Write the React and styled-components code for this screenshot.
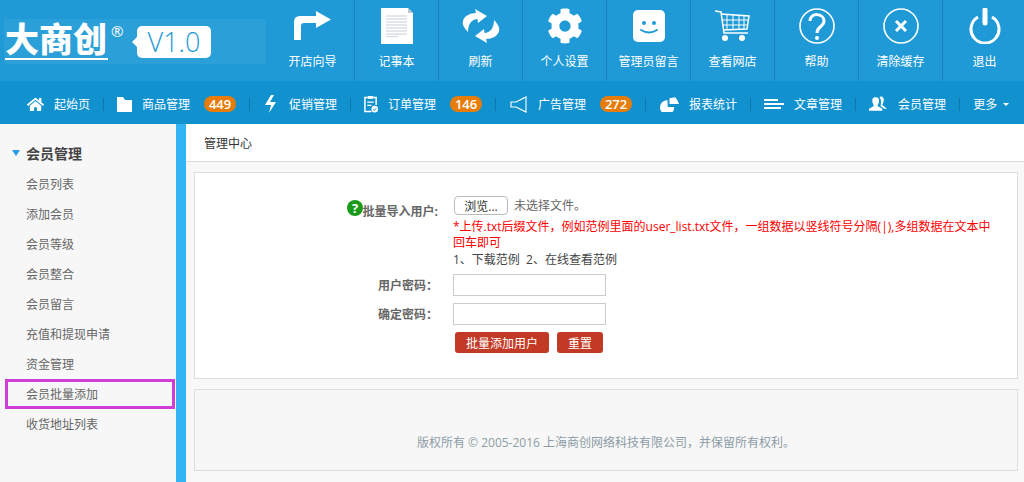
import React from 'react'
import styled, { createGlobalStyle } from 'styled-components'
import { FaHome, FaCog } from 'react-icons/fa'

const topItems = [
	{ label: '开店向导', icon: 'turn' },
	{ label: '记事本', icon: 'note' },
	{ label: '刷新', icon: 'refresh' },
	{ label: '个人设置', icon: 'gear' },
	{ label: '管理员留言', icon: 'smile' },
	{ label: '查看网店', icon: 'cart' },
	{ label: '帮助', icon: 'help' },
	{ label: '清除缓存', icon: 'clear' },
	{ label: '退出', icon: 'power' },
]

const navItems = [
	{ label: '起始页', icon: 'home', width: 17 },
	{ label: '商品管理', icon: 'folder', width: 15, badge: 449 },
	{ label: '促销管理', icon: 'bolt', width: 16 },
	{ label: '订单管理', icon: 'clipboard', width: 14, badge: 146 },
	{ label: '广告管理', icon: 'horn', width: 19, badge: 272 },
	{ label: '报表统计', icon: 'pie', width: 20 },
	{ label: '文章管理', icon: 'lines', width: 20 },
	{ label: '会员管理', icon: 'users', width: 19 },
]

const sideItems = ['会员列表', '添加会员', '会员等级', '会员整合', '会员留言', '充值和提现申请', '资金管理', '会员批量添加', '收货地址列表']

const topIcons = {
	turn: (
		<svg width="38" height="30" viewBox="0 0 38 30">
			<path d="M0 29V11Q0 5 6 5H22V0L37 8.5 22 17V12H10Q7 12 7 15V29Z" fill="#fff" />
		</svg>
	),
	note: (
		<svg width="32" height="36" viewBox="0 0 32 36">
			<path d="M0 0H27L32 5V36H0Z" fill="#fff" />
			<path d="M27 0L32 5H27Z" fill="#b9c4cc" />
			<path d="M5 8H26M5 11H26M5 14H26M5 17H26M5 20H26M5 23H26M5 26H26M5 28.5H17" stroke="#dcdfe2" strokeWidth="1.6" />
		</svg>
	),
	refresh: (
		<svg width="38" height="36" viewBox="0 0 38 36">
			<path d="M13 1L25 8 16 15 15.5 11C10 11 6 16 6 24C2 20 0 16 1 13C2 8 8 5 14 5Z" fill="#fff" />
			<path d="M25 35L13 28 22 21 22.5 25C28 25 32 20 32 12C36 16 38 20 37 23C36 28 30 31 24 31Z" fill="#fff" />
		</svg>
	),
	gear: <FaCog size={36} color="#fff" />,
	smile: (
		<svg width="32" height="32" viewBox="0 0 32 32">
			<rect width="32" height="32" rx="5" fill="#fff" />
			<circle cx="11" cy="13" r="2" fill="#1f9ad6" />
			<circle cx="21" cy="13" r="2" fill="#1f9ad6" />
			<path d="M8 20Q16 25 24 20" fill="none" stroke="#1f9ad6" strokeWidth="2" strokeLinecap="round" />
		</svg>
	),
	cart: (
		<svg width="36" height="32" viewBox="0 0 36 32" fill="none" stroke="#fff">
			<path d="M0 1L6 2 9 23H33" strokeWidth="1.5" />
			<path d="M6 4L34 6 32 19 8 20" strokeWidth="1.5" />
			<path d="M12 5V20M18 5V20M24 6V19M29 6V19M7 10H33M8 15H32" strokeWidth="1" />
			<circle cx="10" cy="28" r="3" fill="#fff" stroke="none" />
			<circle cx="27" cy="28" r="3" fill="#fff" stroke="none" />
		</svg>
	),
	help: (
		<svg width="36" height="36" viewBox="0 0 36 36" fill="none" stroke="#fff">
			<circle cx="18" cy="18" r="17" strokeWidth="1.6" />
			<path d="M11 13C11 4 25 5 25 13C25 19 18 18 18 25" strokeWidth="3" />
			<circle cx="18" cy="30" r="2" fill="#fff" stroke="none" />
		</svg>
	),
	clear: (
		<svg width="36" height="36" viewBox="0 0 36 36" fill="none" stroke="#fff">
			<circle cx="18" cy="18" r="17" strokeWidth="1.6" />
			<path d="M13 13L23 23M23 13L13 23" strokeWidth="3" />
		</svg>
	),
	power: (
		<svg width="32" height="36" viewBox="0 0 32 36" fill="none" stroke="#fff">
			<path d="M9 9A14 14 0 1 0 23 9" strokeWidth="3" />
			<path d="M16 2V15" strokeWidth="5" strokeLinecap="round" />
		</svg>
	),
}

const navIcons = {
	home: <FaHome size={17} color="#fff" />,
	folder: (
		<svg width="15" height="15" viewBox="0 0 15 15">
			<path d="M0 0H6L8 3H15V15H0Z" fill="#fff" />
		</svg>
	),
	bolt: (
		<svg width="12" height="18" viewBox="0 0 12 18">
			<path d="M6 0H9L5 7H11L4 18 6 10H0Z" fill="#fff" />
		</svg>
	),
	clipboard: (
		<svg width="15" height="18" viewBox="0 0 15 18" fill="none" stroke="#fff">
			<path d="M4 2H1V17H8M10 2H13V10" strokeWidth="1.6" />
			<rect x="4" y="0.5" width="6" height="3" fill="#fff" stroke="none" />
			<path d="M3.5 7H10.5M3.5 10.5H8" strokeWidth="1.4" />
			<circle cx="11.5" cy="14.5" r="3.5" fill="#fff" stroke="none" />
			<path d="M9.8 14.5L11.2 16 13.2 13.5" stroke="#1192cf" strokeWidth="1" />
		</svg>
	),
	horn: (
		<svg width="17" height="17" viewBox="0 0 17 17" fill="none" stroke="#fff" strokeWidth="1.1">
			<path d="M1 6H6L16 1V16L6 11H1Z" />
		</svg>
	),
	pie: (
		<svg width="21" height="15" viewBox="0 0 21 15" fill="#fff">
			<path d="M9 3A7.5 7.5 0 1 0 16 10H9Z" />
			<path d="M11 7V1L17 0Q20 3 21 7Z" />
		</svg>
	),
	lines: (
		<svg width="20" height="10" viewBox="0 0 20 10" fill="#fff">
			<rect width="14" height="2" />
			<rect y="4" width="20" height="2" />
			<rect y="8" width="17" height="2" />
		</svg>
	),
	users: (
		<svg width="20" height="16" viewBox="0 0 20 16" fill="#fff">
			<path d="M7 1C10 1 11 3 10.5 6 10.2 8 9 9 9 10L14 13V15H0V13L5 10C5 9 4 8 3.6 6 3 3 4 1 7 1Z" />
			<path d="M12 0C15 0 16 2 15.5 5 15 7 14 8 14 9L19 13H16L12 10C13 8 13 3 11 1Z" />
		</svg>
	),
}

const App = () => {
	return (
		<Page>
			<GlobalStyle />
			<TopBar>
				<Logo>
					<LogoMark>大商创</LogoMark>
					<Registered>®</Registered>
					<Version>V1.0</Version>
				</Logo>
				{topItems.map((item) => (
					<TopItem key={item.label}>
						<TopIcon>{topIcons[item.icon]}</TopIcon>
						<TopLabel>{item.label}</TopLabel>
					</TopItem>
				))}
			</TopBar>
			<Nav>
				{navItems.map((item) => (
					<NavItem key={item.label}>
						<NavIcon $width={item.width}>{navIcons[item.icon]}</NavIcon>
						<span>{item.label}</span>
						{item.badge && <Badge>{item.badge}</Badge>}
					</NavItem>
				))}
				<More>更多<Caret /></More>
			</Nav>
			<Body>
				<Sidebar>
					<SideTitle><TitleArrow />会员管理</SideTitle>
					{sideItems.map((item) => (
						<SideItem key={item} $marked={item === '会员批量添加'}>{item}</SideItem>
					))}
				</Sidebar>
				<Strip />
				<Main>
					<Crumb>管理中心</Crumb>
					<Panel>
						<FormRow $first>
							<FormLabel>
								<HelpIcon>?</HelpIcon>批量导入用户:
							</FormLabel>
							<div>
								<FileRow>
									<FileButton type="button">浏览...</FileButton>
									<span>未选择文件。</span>
								</FileRow>
								<Warning>*上传.txt后缀文件，例如范例里面的user_list.txt文件，一组数据以竖线符号分隔(|),多组数据在文本中回车即可</Warning>
								<Samples>1、下载范例&nbsp;&nbsp;2、在线查看范例</Samples>
							</div>
						</FormRow>
						<FormRow>
							<FormLabel $inset>用户密码：</FormLabel>
							<Input type="password" />
						</FormRow>
						<FormRow>
							<FormLabel $inset>确定密码：</FormLabel>
							<Input type="password" />
						</FormRow>
						<Actions>
							<RedButton type="button">批量添加用户</RedButton>
							<RedButton type="button">重置</RedButton>
						</Actions>
					</Panel>
					<Footer>版权所有 © 2005-2016 上海商创网络科技有限公司，并保留所有权利。</Footer>
				</Main>
			</Body>
		</Page>
	)
}

const font = `"Open Sans", "Noto Sans CJK SC", sans-serif`

const GlobalStyle = createGlobalStyle`
	html, body {
		margin: 0;
		height: 100%;
		overflow: hidden;
	}
	body {
		font-family: ${font};
		font-size: 12px;
	}
`

const Page = styled.div`
	width: 1024px;
	height: 482px;
	display: flex;
	flex-direction: column;
	overflow: hidden;
`

const TopBar = styled.div`
	display: flex;
	height: 81px;
	flex-shrink: 0;
	background-color: #1f9ad6;
`

const Logo = styled.div`
	width: 262px;
	height: 45px;
	margin: 19px 5px 0 4px;
	flex-shrink: 0;
	display: flex;
	align-items: flex-start;
	background-color: #2b9fd8;
`

const LogoMark = styled.div`
	width: 103px;
	height: 38px;
	margin: 1px 0 0 1px;
	color: #fff;
	font-size: 34px;
	font-weight: 900;
	line-height: 38px;
	white-space: nowrap;
	border-bottom: 2px solid #fff;
`

const Registered = styled.div`
	margin: 2px 0 0 3px;
	width: 17px;
	color: #fff;
	font-size: 15px;
	line-height: 20px;
`

const Version = styled.div`
	position: relative;
	width: 74px;
	height: 32px;
	margin: 7px 0 0 9px;
	text-align: center;
	border-radius: 5px;
	background-color: #fff;
	color: #1f9ad6;
	font-size: 27px;
	font-weight: 300;
	line-height: 32px;

	&::before {
		content: "";
		position: absolute;
		left: -5px;
		top: 11px;
		border-style: solid;
		border-width: 5px 5px 5px 0;
		border-color: transparent #fff transparent transparent;
	}
`

const TopItem = styled.div`
	width: 84px;
	flex-shrink: 0;
	display: flex;
	flex-direction: column;
	align-items: center;
	border-right: 1px solid #1583bf;
	box-sizing: border-box;
	color: #fff;
`

const TopIcon = styled.div`
	height: 36px;
	margin-top: 8px;
	display: flex;
	align-items: center;
	justify-content: center;
`

const TopLabel = styled.div`
	margin-top: 9px;
	font-size: 12px;
	line-height: 18px;
	white-space: nowrap;
`

const Nav = styled.div`
	display: flex;
	align-items: center;
	height: 43px;
	flex-shrink: 0;
	padding: 3px 0 0 14px;
	box-sizing: border-box;
	background-color: #1192cf;
	color: #fff;
	white-space: nowrap;
`

const NavItem = styled.div`
	position: relative;
	display: flex;
	align-items: center;
	padding: 0 13px;
	border-right: 1px solid #0d78ad;
	height: 13px;
	line-height: 13px;
`

const NavIcon = styled.div`
	width: ${(props) => props.$width}px;
	height: 18px;
	margin-right: 10px;
	display: flex;
	align-items: center;
	justify-content: center;
	flex-shrink: 0;
`

const Badge = styled.span`
	width: 32px;
	height: 16px;
	margin-left: 14px;
	border-radius: 8px;
	background-color: #e87c08;
	font-size: 13px;
	font-weight: 600;
	line-height: 16px;
	text-align: center;
`

const More = styled.div`
	display: flex;
	align-items: center;
	padding-left: 13px;
`

const Caret = styled.span`
	margin-left: 6px;
	border-style: solid;
	border-width: 3px 3px 0;
	border-color: #fff transparent transparent;
`

const Body = styled.div`
	display: flex;
	flex: 1;
	min-height: 0;
`

const Sidebar = styled.div`
	width: 176px;
	flex-shrink: 0;
	padding-top: 14px;
	box-sizing: border-box;
	background-color: #f7f7f7;
`

const SideTitle = styled.div`
	display: flex;
	align-items: center;
	height: 30px;
	margin-bottom: 2px;
	padding-left: 12px;
	color: #444;
	font-size: 14px;
	font-weight: bold;
`

const TitleArrow = styled.span`
	margin-right: 6px;
	border-style: solid;
	border-width: 6px 4.5px 0;
	border-color: #2a9be8 transparent transparent;
`

const SideItem = styled.div`
	height: 30px;
	line-height: 30px;
	padding-left: 26px;
	color: #666;
	box-sizing: border-box;

	${(props) => props.$marked && `
		margin: -1px 1px 1px 5px;
		padding-left: 18px;
		line-height: 26px;
		border: 3px solid #cf3fd6;
	`}
`

const Strip = styled.div`
	width: 10px;
	flex-shrink: 0;
	background-color: #33b5f5;
`

const Main = styled.div`
	flex: 1;
	min-width: 0;
	padding-bottom: 11px;
	box-sizing: border-box;
	display: flex;
	flex-direction: column;
	background-color: #f8f8f8;
`

const Crumb = styled.div`
	height: 38px;
	line-height: 40px;
	padding-left: 18px;
	box-sizing: border-box;
	color: #333;
	background-color: #fff;
	border-bottom: 1px solid #ddd;
`

const Panel = styled.div`
	height: 207px;
	margin: 10px 6px 0 8px;
	padding-top: 22px;
	box-sizing: border-box;
	background-color: #fff;
	border: 1px solid #ddd;
`

const FormRow = styled.div`
	display: grid;
	grid-template-columns: 243px 540px;
	column-gap: 15px;
	align-items: ${(props) => (props.$first ? 'start' : 'center')};
	margin-bottom: ${(props) => (props.$first ? '5px' : '7px')};
`

const FormLabel = styled.div`
	position: relative;
	text-align: right;
	color: #666;
	font-weight: bold;
	height: 22px;
	line-height: ${(props) => (props.$inset ? '24px' : '22px')};
	padding-top: ${(props) => (props.$inset ? '0' : '6px')};
`

const HelpIcon = styled.span`
	position: absolute;
	left: 152px;
	top: 5px;
	width: 16px;
	height: 16px;
	border-radius: 50%;
	background-color: #1a9a1a;
	color: #fff;
	font-size: 13px;
	font-weight: bold;
	line-height: 16px;
	text-align: center;
`

const FileRow = styled.div`
	display: flex;
	align-items: center;
	gap: 6px;
	height: 20px;
	color: #666;
`

const FileButton = styled.button`
	width: 54px;
	height: 19px;
	margin-left: 1px;
	padding: 0;
	border: 1px solid #bbb;
	border-radius: 4px;
	background-color: #fff;
	color: #333;
	font-family: ${font};
	font-size: 12px;
`

const Warning = styled.div`
	margin-top: 4px;
	color: #f00;
	line-height: 16px;
`

const Samples = styled.div`
	color: #444;
	line-height: 18px;
`

const Input = styled.input`
	width: 153px;
	height: 22px;
	padding: 0;
	box-sizing: border-box;
	border: 1px solid #ccc;
	background-color: #fff;
`

const Actions = styled.div`
	display: flex;
	gap: 8px;
	padding-left: 260px;
`

const RedButton = styled.button`
	height: 21px;
	padding: 0 11px;
	border: 0;
	border-radius: 3px;
	background-color: #c23a25;
	color: #fff;
	font-family: ${font};
	font-size: 12px;
`

const Footer = styled.div`
	flex: 1;
	margin: 10px 6px 0 8px;
	padding-top: 43px;
	box-sizing: border-box;
	text-align: center;
	color: #8d9ca6;
	background-color: #f7f7f7;
	border: 1px solid #ddd;
`

export default App
